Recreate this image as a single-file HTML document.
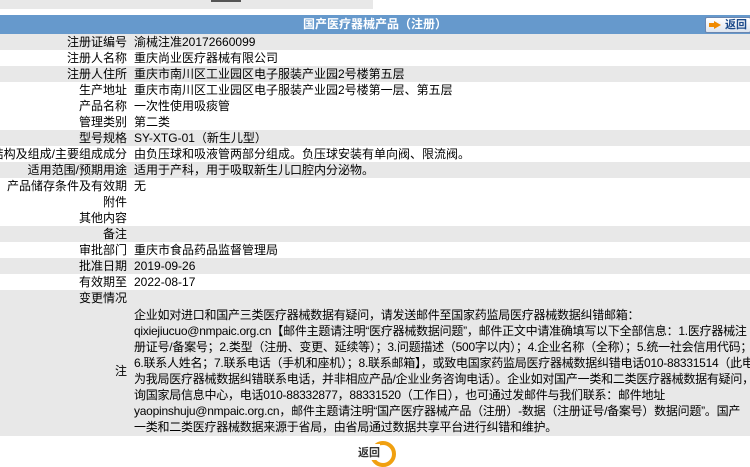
<!DOCTYPE html>
<html><head><meta charset="utf-8"><style>
*{margin:0;padding:0;box-sizing:border-box}
body{width:750px;height:462px;background:#fff;font-family:"Liberation Sans","Noto Sans CJK SC",sans-serif;font-size:12px;color:#000;position:relative;overflow:hidden}
.top{position:absolute;left:0;top:0;width:373px;height:9px;background:#e8e8e8}
.top i{position:absolute;left:211px;top:0;width:30px;height:2px;background:#555}
.hd{position:absolute;left:0;top:15px;width:750px;height:19px;background:#6699cc;color:#fff;font-weight:bold;text-align:center;line-height:19px;font-size:12px}
.btn{position:absolute;left:705px;top:17px;width:46px;height:16px;background:linear-gradient(#fff,#dde4ee);border:1px solid #6a86b0;border-radius:2px;color:#1c4a8a;font-weight:bold;font-size:11px;line-height:14px;padding-left:19px;text-align:left}
.btn b{position:absolute;left:8px;top:3px;width:0;height:0;border-left:7px solid #f08a00;border-top:4px solid transparent;border-bottom:4px solid transparent}
.btn b:before{content:"";position:absolute;left:-12px;top:-2px;width:5px;height:4px;background:#f08a00}
table{position:absolute;left:0;top:34px;width:750px;border-collapse:collapse;table-layout:fixed}
td{height:16px;line-height:16px;padding:0;white-space:nowrap;overflow:hidden}
td.l{width:127px;text-align:right}
td.v{padding-left:7px}
tr.g td{background:#e8e8e8}
.note{line-height:16px;padding-top:1px;padding-bottom:1px;letter-spacing:-0.25px}
.back{position:absolute;left:356px;top:441px;width:40px;height:22px}
.back .c{position:absolute;left:14px;top:0;width:26px;height:26px;border-radius:50%;border:4px solid #f0a010;background:#fff}
.back span{position:absolute;left:2px;top:3px;font-weight:bold;font-size:11px;color:#333;background:#fff}
</style></head><body>
<div class="top"><i></i></div>
<div class="hd">国产医疗器械产品（注册）</div>
<div class="btn"><b></b>返回</div>
<table>
<colgroup><col style="width:127px"><col></colgroup>
<tr class="g"><td class="l">注册证编号</td><td class="v">渝械注准20172660099</td></tr>
<tr><td class="l">注册人名称</td><td class="v">重庆尚业医疗器械有限公司</td></tr>
<tr class="g"><td class="l">注册人住所</td><td class="v">重庆市南川区工业园区电子服装产业园2号楼第五层</td></tr>
<tr><td class="l">生产地址</td><td class="v">重庆市南川区工业园区电子服装产业园2号楼第一层、第五层</td></tr>
<tr><td class="l">产品名称</td><td class="v">一次性使用吸痰管</td></tr>
<tr><td class="l">管理类别</td><td class="v">第二类</td></tr>
<tr class="g"><td class="l">型号规格</td><td class="v">SY-XTG-01（新生儿型）</td></tr>
<tr><td class="l"><div style="width:127px;overflow:hidden;direction:rtl">结构及组成/主要组成成分</div></td><td class="v">由负压球和吸液管两部分组成。负压球安装有单向阀、限流阀。</td></tr>
<tr class="g"><td class="l">适用范围/预期用途</td><td class="v">适用于产科，用于吸取新生儿口腔内分泌物。</td></tr>
<tr><td class="l">产品储存条件及有效期</td><td class="v">无</td></tr>
<tr><td class="l">附件</td><td class="v"></td></tr>
<tr><td class="l">其他内容</td><td class="v"></td></tr>
<tr class="g"><td class="l">备注</td><td class="v"></td></tr>
<tr><td class="l">审批部门</td><td class="v">重庆市食品药品监督管理局</td></tr>
<tr class="g"><td class="l">批准日期</td><td class="v">2019-09-26</td></tr>
<tr><td class="l">有效期至</td><td class="v">2022-08-17</td></tr>
<tr class="g"><td class="l">变更情况</td><td class="v"></td></tr>
<tr class="g"><td class="l">注</td><td class="v note">企业如对进口和国产三类医疗器械数据有疑问，请发送邮件至国家药监局医疗器械数据纠错邮箱：<br>qixiejiucuo@nmpaic.org.cn【邮件主题请注明“医疗器械数据问题”，邮件正文中请准确填写以下全部信息：1.医疗器械注<br>册证号/备案号；2.类型（注册、变更、延续等）；3.问题描述（500字以内）；4.企业名称（全称）；5.统一社会信用代码；<br>6.联系人姓名；7.联系电话（手机和座机）；8.联系邮箱】，或致电国家药监局医疗器械数据纠错电话010-88331514（此电话<br>为我局医疗器械数据纠错联系电话，并非相应产品/企业业务咨询电话）。企业如对国产一类和二类医疗器械数据有疑问，请咨<br>询国家局信息中心，电话010-88332877，88331520（工作日），也可通过发邮件与我们联系：邮件地址<br>yaopinshuju@nmpaic.org.cn，邮件主题请注明“国产医疗器械产品（注册）-数据（注册证号/备案号）数据问题”。国产<br>一类和二类医疗器械数据来源于省局，由省局通过数据共享平台进行纠错和维护。</td></tr>
</table>
<div class="back"><div class="c"></div><span>返回</span></div>
</body></html>
